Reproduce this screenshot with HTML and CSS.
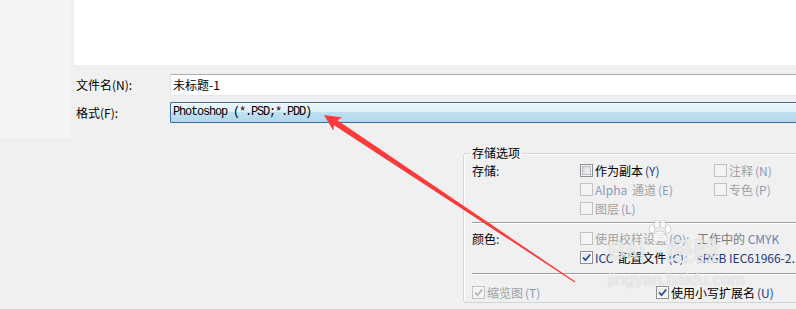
FILE: index.html
```html
<!DOCTYPE html>
<html lang="zh-CN">
<head>
    <meta charset="UTF-8">
    <title>存储为</title>
    <link rel="stylesheet" href="styles.css">
</head>
<body>
<div class="dialog">
    <!-- Upper part: places strip, file list, name and format -->
    <div class="top">
        <div class="places"></div>
        <div class="main">
            <div class="preview"></div>
            <div class="fields">
                <div class="field-row">
                    <span class="field-label">文件名(N):</span>
                    <div class="textbox">未标题-1</div>
                </div>
                <div class="field-row">
                    <span class="field-label">格式(F):</span>
                    <div class="combo">Photoshop (*.PSD;*.PDD)</div>
                </div>
            </div>
        </div>
    </div>

    <!-- Save options group -->
    <div class="lower">
        <fieldset class="options">
            <legend>存储选项</legend>

            <div class="opt-grid">
                <span class="opt-label">存储<span class="lat">:</span></span>
                <label class="cb-item"><span class="cb"></span>作为副本<span class="lat">(Y)</span></label>
                <label class="cb-item off"><span class="cb disabled"></span>注释<span class="lat">(N)</span></label>

                <span></span>
                <label class="cb-item off"><span class="cb disabled"></span><span class="lat">Alpha</span>&nbsp;通道<span class="lat">(E)</span></label>
                <label class="cb-item off"><span class="cb disabled"></span>专色<span class="lat">(P)</span></label>

                <span></span>
                <label class="cb-item off"><span class="cb disabled"></span>图层<span class="lat">(L)</span></label>
                <span></span>
            </div>

            <div class="divider"></div>

            <div class="opt-grid opt-color">
                <span class="opt-label">颜色<span class="lat">:</span></span>
                <label class="cb-item off"><span class="cb disabled"></span>使用校样设置<span class="lat">(O):</span></label>
                <span class="note">工作中的 <span class="lat">CMYK</span></span>

                <span></span>
                <label class="cb-item"><span class="cb checked"><svg viewBox="0 0 11 11"><path d="M2 5.5 L4.5 8.2 L9.2 2.5"/></svg></span><span class="lat">ICC</span>&nbsp;配置文件<span class="lat">(C):</span></label>
                <span class="note-on lat">sRGB IEC61966-2.1</span>
            </div>

            <div class="divider second"></div>

            <div class="opt-grid opt-bottom">
                <label class="cb-item off"><span class="cb disabled checked"><svg viewBox="0 0 11 11"><path d="M2 5.5 L4.5 8.2 L9.2 2.5"/></svg></span>缩览图<span class="lat">(T)</span></label>
                <label class="cb-item"><span class="cb checked"><svg viewBox="0 0 11 11"><path d="M2 5.5 L4.5 8.2 L9.2 2.5"/></svg></span>使用小写扩展名<span class="lat">(U)</span></label>
            </div>
        </fieldset>
    </div>

    <!-- Red pointer arrow drawn over the dialog -->
    <svg class="arrow" width="796" height="309" viewBox="0 0 796 309">
        <polygon points="324,115 342.2,117.5 337.3,120.3 575.3,281.6 574.7,282.4 334,125.3 333.3,130.8" fill="#fb3b3b"/>
    </svg>

    <!-- Site watermark -->
    <div class="watermark">
        <div class="wm-logo">
            <span class="wm-bai">Bai</span>
            <svg class="wm-paw" viewBox="0 0 26 24">
                <ellipse cx="5" cy="9" rx="3" ry="4"/>
                <ellipse cx="10" cy="4" rx="3" ry="4"/>
                <ellipse cx="16" cy="4" rx="3" ry="4"/>
                <ellipse cx="21" cy="9" rx="3" ry="4"/>
                <path d="M13 11 C8 11 5 17 6 20 C7 23 11 22 13 21 C15 22 19 23 20 20 C21 17 18 11 13 11 Z"/>
            </svg>
            <span class="wm-cn">经验</span>
        </div>
        <div class="wm-url">jingyan.baidu.com</div>
    </div>
</div>
</body>
</html>
```

FILE: styles.css
```css
html, body {
    margin: 0;
    height: 100%;
}

body {
    background-color: #f0f0f0;
    font-family: "Noto Sans CJK SC", sans-serif;
    font-size: 12px;
    color: #000;
    overflow: hidden;
}

.dialog {
    position: relative;
    width: 796px;
    height: 309px;
    overflow: hidden;
}

/* Upper part */
.top {
    display: flex;
    gap: 4px;
}

.places {
    flex: none;
    width: 70px;
    height: 138px;
    background-color: #f5f5f5;
}

.main {
    flex: 1;
}

.preview {
    height: 65px;
    background-color: #fff;
}

.fields {
    display: flex;
    flex-direction: column;
    gap: 6px;
    padding: 9px 0 0 2px;
}

.field-row {
    display: flex;
    align-items: center;
}

.field-label {
    flex: none;
    width: 94px;
    line-height: 14px;
}

.textbox {
    flex: 1;
    height: 22px;
    box-sizing: border-box;
    border: 1px solid;
    border-color: #abadb3 #dbdfe6 #e3e9ef #e2e3ea;
    border-right: none;
    background-color: #fff;
    padding-left: 2px;
    line-height: 20px;
}

.combo {
    flex: 1;
    height: 21px;
    box-sizing: border-box;
    border: 1px solid #3c6f9e;
    border-right: none;
    border-radius: 2px 0 0 2px;
    background: linear-gradient(#eaf5fb, #dff0f9 50%, #c0e0f1 50%, #b3d7ec);
    box-shadow: inset 0 1px #f7fbfd;
    padding-left: 2px;
    font-family: "Liberation Mono", monospace;
    font-size: 12px;
    letter-spacing: -1.2px;
    line-height: 19px;
    color: #000;
}

/* Save options */
.lower {
    padding: 7px 0 0 463px;
}

.options {
    margin: 0;
    width: 400px;
    min-inline-size: 0;
    border: 1px solid #d5d5d5;
    border-radius: 3px;
    box-shadow: inset 1px 1px #fff;
    padding: 0 0 0 8px;
}

.options legend {
    padding: 0 2px;
    margin-left: -2px;
    line-height: 16px;
}

.opt-grid {
    display: grid;
    grid-template-columns: 108px 134px 1fr;
    grid-auto-rows: 19px;
    align-items: center;
}

.opt-color {
    grid-template-columns: 108px 117px 1fr;
    margin-top: 6px;
}

.opt-bottom {
    grid-template-columns: 184px 1fr;
    margin-top: 9px;
}

.opt-label {
    line-height: 14px;
}

.divider {
    height: 1px;
    margin-top: 4px;
    background-color: #a0a0a0;
    box-shadow: 0 1px #fff;
}

.divider.second {
    margin-top: 6px;
}

.cb-item {
    display: flex;
    align-items: center;
    gap: 2px;
    white-space: nowrap;
    line-height: 14px;
}

.lat {
    color: #1d3a82;
}

.off {
    color: #a3a3a3;
}

.off .lat {
    color: #8d9bbb;
}

.note {
    color: #7a7a7a;
    white-space: nowrap;
}

.note .lat {
    color: #6c7fae;
}

.note-on {
    white-space: nowrap;
}

/* Checkboxes */
.cb {
    flex: none;
    display: flex;
    align-items: center;
    justify-content: center;
    width: 13px;
    height: 13px;
    box-sizing: border-box;
    border: 1px solid #8e8f8f;
    background: linear-gradient(135deg, #d2d5d9, #f8f8f8);
    box-shadow: inset 0 0 0 1px #f4f4f4, inset 0 0 0 2px #b9bcc0;
}

.cb.checked {
    background: linear-gradient(135deg, #e1e4e8, #fbfbfb);
    box-shadow: inset 0 0 0 1px #fff;
}

.cb.disabled {
    border-color: #c2c2c2;
    background: #f4f4f4;
    box-shadow: none;
}

.cb svg {
    width: 11px;
    height: 11px;
}

.cb svg path {
    fill: none;
    stroke: #2a4a95;
    stroke-width: 1.8;
}

.cb.disabled svg path {
    stroke: #b5b5b5;
}

/* Overlays */
.arrow {
    position: absolute;
    top: 0;
    left: 0;
    pointer-events: none;
}

.watermark {
    position: absolute;
    left: 608px;
    top: 220px;
    color: rgba(255, 255, 255, 0.72);
    text-shadow: 0 0 1px rgba(110, 110, 110, 0.45);
    pointer-events: none;
}

.wm-logo {
    display: flex;
    align-items: flex-end;
    height: 44px;
}

.wm-bai {
    font-family: "Liberation Sans", sans-serif;
    font-weight: bold;
    font-size: 24px;
    line-height: 26px;
}

.wm-paw {
    width: 26px;
    height: 24px;
    align-self: flex-start;
    margin: 0 -2px 0 2px;
}

.wm-paw ellipse,
.wm-paw path {
    fill: rgba(255, 255, 255, 0.72);
    stroke: rgba(120, 120, 120, 0.35);
    stroke-width: 0.8;
}

.wm-cn {
    font-size: 26px;
    font-weight: bold;
    line-height: 28px;
    margin-left: -4px;
}

.wm-url {
    font-family: "Liberation Sans", sans-serif;
    font-size: 17px;
    line-height: 20px;
    margin-top: 6px;
}
```
